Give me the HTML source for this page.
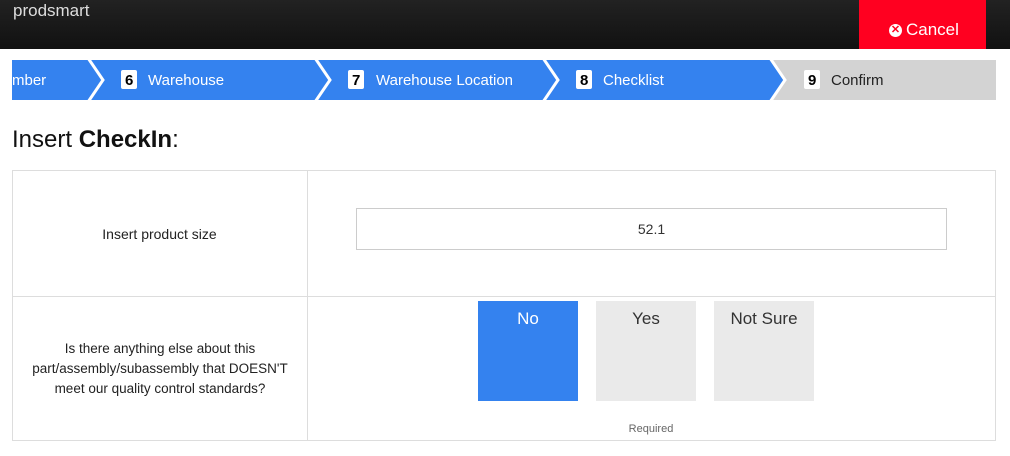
<!DOCTYPE html>
<html><head><style>
*{margin:0;padding:0;box-sizing:border-box}
body{width:1010px;height:456px;background:#fff;font-family:"Liberation Sans",sans-serif;position:relative;overflow:hidden;color:#222}
.hdr{position:absolute;left:0;top:0;width:1010px;height:49px;background:linear-gradient(#222,#111)}
.logo{position:absolute;left:13px;top:1px;color:#ddd;font-size:17px}
.cancel{position:absolute;left:859px;top:0;width:127px;height:49px;background:#ff0020;color:#fff;font-size:17px;padding:20px 0 0 30px}
.cancel i{position:absolute;left:30px;top:24px;width:13px;height:13px;border-radius:50%;background:#fff;color:#ff0020;font-style:normal;font-size:11px;line-height:13px;text-align:center;font-weight:bold}
.cancel span{margin-left:17px}
h1{position:absolute;left:12px;top:126px;font-weight:normal;font-size:24px;color:#111}
.tbl{position:absolute;left:12px;top:170px;width:984px;height:271px;border:1px solid #ddd}
.vl{position:absolute;left:307px;top:170px;width:1px;height:271px;background:#ddd}
.hl{position:absolute;left:12px;top:296px;width:984px;height:1px;background:#ddd}
.lbl{position:absolute;font-size:14px;text-align:center;line-height:20px;color:#222}
.inp{position:absolute;left:356px;top:208px;width:591px;height:42px;border:1px solid #ccc;text-align:center;font-size:14px;line-height:40px;color:#333}
.b{position:absolute;top:301px;width:100px;height:100px;background:#eaeaea;text-align:center;font-size:17px;padding-top:8px;color:#333}
.req{position:absolute;left:600px;top:423px;width:102px;text-align:center;font-size:11px;color:#666}
</style></head><body>
<div class="hdr"><div class="logo">prodsmart</div><div class="cancel"><i>✕</i><span>Cancel</span></div></div>
<svg width="1010" height="40" style="position:absolute;left:0;top:60px">
<rect x="12" y="0" width="984" height="40" fill="#d3d3d3"/>
<polygon points="12,0 772,0 786,20 772,40 12,40" fill="#3482ef"/>
<g fill="none" stroke="#fff" stroke-width="3">
<polyline points="88,-2 103,20 88,42"/>
<polyline points="315,-2 330,20 315,42"/>
<polyline points="543,-2 558,20 543,42"/>
<polyline points="770,-2 785,20 770,42"/>
</g>
<g fill="#fff"><rect x="121" y="10" width="16" height="19" rx="2"/><rect x="348" y="10" width="16" height="19" rx="2"/><rect x="576" y="10" width="16" height="19" rx="2"/><rect x="804" y="10" width="16" height="19" rx="2"/></g>
<g font-family="Liberation Sans" font-size="15" fill="#fff">
<text x="12" y="25">mber</text>
<text x="125" y="25" fill="#000" font-weight="bold">6</text><text x="148" y="25">Warehouse</text>
<text x="352" y="25" fill="#000" font-weight="bold">7</text><text x="376" y="25">Warehouse Location</text>
<text x="580" y="25" fill="#000" font-weight="bold">8</text><text x="603" y="25">Checklist</text>
<text x="808" y="25" fill="#000" font-weight="bold">9</text><text x="831" y="25" fill="#222">Confirm</text>
</g></svg>
<h1>Insert <b>CheckIn</b>:</h1>
<div class="tbl"></div><div class="vl"></div><div class="hl"></div>
<div class="lbl" style="left:12px;top:224px;width:295px">Insert product size</div>
<div class="lbl" style="left:14px;top:339px;width:292px;font-size:13.5px">Is there anything else about this<br>part/assembly/subassembly that DOESN'T<br>meet our quality control standards?</div>
<div class="inp">52.1</div>
<div class="b" style="left:478px;background:#3482ef;color:#fff">No</div>
<div class="b" style="left:596px">Yes</div>
<div class="b" style="left:714px">Not Sure</div>
<div class="req">Required</div>
</body></html>
